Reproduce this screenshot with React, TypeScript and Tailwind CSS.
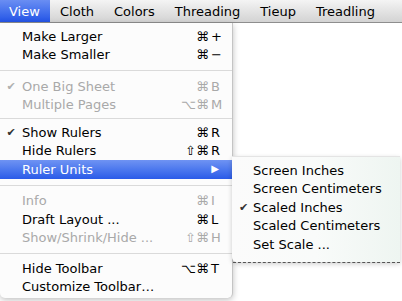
import React from "react"

type Item =
    | { sep: number }
    | {
          sep?: undefined
          label: string
          mods?: string
          keyChar?: string
          disabled?: boolean
          checked?: boolean
          active?: boolean
          submenu?: boolean
      }

// separator heights taken from the screenshot, they are not all equal
const viewMenu: Item[] = [
    { label: "Make Larger", mods: "⌘", keyChar: "+" },
    { label: "Make Smaller", mods: "⌘", keyChar: "−" },
    { sep: 13 },
    { label: "One Big Sheet", mods: "⌘", keyChar: "B", disabled: true, checked: true },
    { label: "Multiple Pages", mods: "⌥⌘", keyChar: "M", disabled: true },
    { sep: 9 },
    { label: "Show Rulers", mods: "⌘", keyChar: "R", checked: true },
    { label: "Hide Rulers", mods: "⇧⌘", keyChar: "R" },
    { label: "Ruler Units", active: true, submenu: true },
    { sep: 13 },
    { label: "Info", mods: "⌘", keyChar: "I", disabled: true },
    { label: "Draft Layout ...", mods: "⌘", keyChar: "L" },
    { label: "Show/Shrink/Hide ...", mods: "⇧⌘", keyChar: "H", disabled: true },
    { sep: 12 },
    { label: "Hide Toolbar", mods: "⌥⌘", keyChar: "T" },
    { label: "Customize Toolbar…" },
]

const unitsMenu: Item[] = [
    { label: "Screen Inches" },
    { label: "Screen Centimeters" },
    { label: "Scaled Inches", checked: true },
    { label: "Scaled Centimeters" },
    { label: "Set Scale ..." },
]

const menuTitles = ["View", "Cloth", "Colors", "Threading", "Tieup", "Treadling"]

function MenuRow({ item, wide }: { item: Item; wide?: boolean }) {
    if (item.sep) {
        return (
            <div className="flex items-center" style={{ height: item.sep }}>
                <div className="h-px w-full bg-[#dadada]" />
            </div>
        )
    }
    const textColor = item.active ? "text-white" : item.disabled ? "text-[#a9a9a9]" : "text-black"
    return (
        <div
            className={`h-[18.5px] flex items-center ${textColor} ${
                item.active ? "bg-gradient-to-b from-[#6f93f3] to-[#2a5ae8]" : ""
            }`}
        >
            <span
                className={`${wide ? "w-[22px]" : "w-[21px] pl-[2px]"} shrink-0 text-center text-[11px] ${
                    item.disabled ? "text-[#b0b0b0]" : "text-[#333]"
                }`}
            >
                {item.checked ? "✔" : ""}
            </span>
            <span className="flex-1 whitespace-nowrap">{item.label}</span>
            {wide && item.mods && (
                <span className="flex items-center pr-[11px]">
                    <span className="text-right">{item.mods}</span>
                    <span className="w-[12px] pl-[2px]">{item.keyChar}</span>
                </span>
            )}
            {item.submenu && <span className="pr-[13px] text-[10px] text-white">▶</span>}
        </div>
    )
}

export default function App() {
    return (
        <div
            className="w-[402px] h-[301px] overflow-hidden bg-white text-[13px] leading-none"
            style={{ fontFamily: '"DejaVu Sans", sans-serif' }}
        >
            {/* Menu bar */}
            <div className="h-[23px] flex items-stretch border-b border-[#8e8e8e] bg-gradient-to-b from-[#f4f4f4] to-[#d3d3d3]">
                {menuTitles.map((t, i) => (
                    <div
                        key={t}
                        className={`flex items-center ${
                            i === 0
                                ? "pl-[9px] pr-[9px] w-[50px] text-white bg-gradient-to-b from-[#6a8ef3] to-[#2453e6]"
                                : "px-[10px] text-black"
                        }`}
                    >
                        {t}
                    </div>
                ))}
            </div>

            <div className="flex items-start">
                {/* View menu */}
                <div className="w-[233px] shrink-0 pt-[4px] pb-[2px] bg-[#fcfcfc] border-r border-[#c4c4c4] rounded-b-[5px] shadow-[0_2px_6px_rgba(0,0,0,0.25)]">
                    {viewMenu.map((item, i) => (
                        <MenuRow key={i} item={item} wide />
                    ))}
                </div>

                {/* Ruler Units submenu + window behind */}
                <div className="flex-1 pt-[133px] pr-[2px]">
                    <div className="-ml-px pt-[4px] pb-[8px] bg-gradient-to-r from-[#fbfbfb] via-[#f9fbfa] to-[#eef5f1] border-t border-[#e4e4e4] shadow-[0_2px_5px_rgba(0,0,0,0.2)] rounded-bl-[5px]">
                        {unitsMenu.map((item, i) => (
                            <MenuRow key={i} item={item} />
                        ))}
                    </div>
                    <div className="h-[50px] border-t border-dashed border-[#555]" />
                </div>
            </div>
        </div>
    )
}
